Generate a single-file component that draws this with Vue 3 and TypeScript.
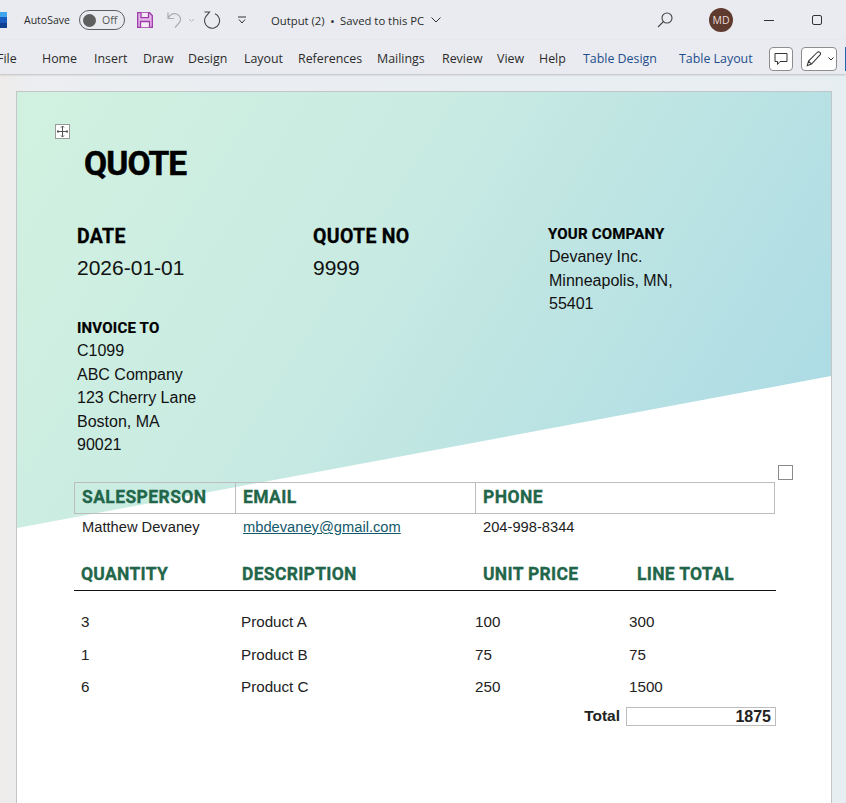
<template>
  <div class="window">
    <header class="titlebar">
      <svg class="logo" width="7" height="16" viewBox="0 0 7 16"><path d="M0 0h7v16H0z" fill="#185abd" /><path d="M0 0h7v5H0z" fill="#41a5ee" /><path d="M0 11h7v5H0z" fill="#103f91" /></svg>
      <span class="autosave">AutoSave</span>
      <span class="toggle"><i class="knob"></i><span>Off</span></span>
      <svg class="save" width="16" height="16" viewBox="0 0 16 16" fill="none" stroke="#9c3aa6" stroke-width="1.300">
        <path d="M.7.700h11.800L15.300 3.500v11.800H.7z" fill="#e6b8ea" />
        <path d="M4 .7v5h7.500V.7M3.500 15.300V9.500h9v5.800" fill="#f6e9f7" />
      </svg>
      <svg class="undo" width="15" height="16" viewBox="0 0 15 16" fill="none" stroke="#a9abb0" stroke-width="1.200">
        <path d="M1 .5v6h6M1 6.500C3 3 6 1 9.500 2c4 1.300 5 5.500 3 8.500L8 15.500" />
      </svg>
      <svg class="caret-dim" width="7" height="5" viewBox="0 0 7 5" fill="none" stroke="#b5b7bc"><path d="M1 1l2.500 2.500L6 1" /></svg>
      <svg class="redo" width="17" height="18" viewBox="0 0 17 18" fill="none" stroke="#44464a" stroke-width="1.100">
        <path d="M11 2.800a7.500 7.500 0 1 1-9 2.500L5.500 1H.5" />
      </svg>
      <svg class="qat" width="8" height="8" viewBox="0 0 8 8" fill="none" stroke="#333"><path d="M0 1h8M1 3.500l3 3.500 3-3.500" /></svg>
      <span class="doc-title">Output (2)<b>•</b>Saved to this PC</span>
      <svg class="title-chev" width="10" height="6" viewBox="0 0 10 6" fill="none" stroke="#333"><path d="M.5.500 5 5 9.500.500" /></svg>
      <svg class="search" width="16" height="16" viewBox="0 0 16 16" fill="none" stroke="#444" stroke-width="1.100"><circle cx="10" cy="6" r="5" /><path d="M6.500 9.500 1 15" /></svg>
      <span class="avatar">MD</span>
      <span class="minimize"></span>
      <span class="maximize"></span>
    </header>

    <nav class="tabs">
      <span v-for="tab in tabs" :key="tab.name" class="tab" :class="{ contextual: tab.contextual }" :style="{ width: tab.width + 'px' }">{{ tab.name }}</span>
      <span class="tool-btn comment">
        <svg width="14" height="14" viewBox="0 0 14 14" fill="none" stroke="#333"><path d="M1 1.500h12v8H6l-2.500 3v-3H1z" /></svg>
      </span>
      <span class="tool-btn editing">
        <svg width="16" height="16" viewBox="0 0 19 19" fill="none" stroke="#333" stroke-width="1.200"><path d="M1.500 17.500 3 12 13.500 1.500c1-.8 2-.8 3 .2s1 2 .2 3L6.500 15.500zM3 12l3.500 3.500" /></svg>
        <svg width="6" height="4" viewBox="0 0 6 4" fill="none" stroke="#333"><path d="M.5.500 3 3 5.500.500" /></svg>
      </span>
      <span class="share-edge"></span>
    </nav>

    <main class="canvas">
      <section class="page">
        <div class="swoosh"></div>
        <span class="move-handle">
          <svg width="11" height="11" viewBox="0 0 11 11" fill="none" stroke="#555"><path d="M5.500 0v11M0 5.500h11M4 1.500 5.500 0 7 1.500M4 9.500 5.500 11 7 9.500M1.500 4 0 5.500 1.500 7M9.500 4 11 5.500 9.500 7" /></svg>
        </span>
        <span class="resize-handle"></span>

        <h1 class="title">QUOTE</h1>

        <div class="meta">
          <div>
            <h2 class="meta-label">DATE</h2>
            <p class="meta-value">2026-01-01</p>
          </div>
          <div>
            <h2 class="meta-label">QUOTE NO</h2>
            <p class="meta-value">9999</p>
          </div>
          <div class="company">
            <h3 class="block-label">YOUR COMPANY</h3>
            <p v-for="line in company" :key="line" class="block-line">{{ line }}</p>
          </div>
        </div>

        <div class="invoice">
          <h3 class="block-label">INVOICE TO</h3>
          <p v-for="line in invoiceTo" :key="line" class="block-line">{{ line }}</p>
        </div>

        <div class="contact">
          <div class="contact-head">
            <span>SALESPERSON</span>
            <span>EMAIL</span>
            <span>PHONE</span>
          </div>
          <div class="contact-row">
            <span>Matthew Devaney</span>
            <a class="mail">mbdevaney@gmail.com</a>
            <span>204-998-8344</span>
          </div>
        </div>

        <div class="items-head">
          <span>QUANTITY</span>
          <span>DESCRIPTION</span>
          <span>UNIT PRICE</span>
          <span>LINE TOTAL</span>
        </div>
        <div class="items">
          <div v-for="item in items" :key="item.description" class="item-row">
            <span>{{ item.quantity }}</span>
            <span>{{ item.description }}</span>
            <span>{{ item.price }}</span>
            <span>{{ item.quantity * item.price }}</span>
          </div>
        </div>

        <div class="total">
          <span class="total-label">Total</span>
          <span class="total-value">{{ total }}</span>
        </div>
      </section>
    </main>
  </div>
</template>

<script setup lang="ts">
import { computed } from 'vue';

const tabs = [
  { name: 'File', width: 45 },
  { name: 'Home', width: 52 },
  { name: 'Insert', width: 49 },
  { name: 'Draw', width: 45 },
  { name: 'Design', width: 56 },
  { name: 'Layout', width: 54 },
  { name: 'References', width: 79 },
  { name: 'Mailings', width: 65 },
  { name: 'Review', width: 55 },
  { name: 'View', width: 42 },
  { name: 'Help', width: 44 },
  { name: 'Table Design', width: 96, contextual: true },
  { name: 'Table Layout', width: 90, contextual: true },
];

const company = ['Devaney Inc.', 'Minneapolis, MN,', '55401'];
const invoiceTo = ['C1099', 'ABC Company', '123 Cherry Lane', 'Boston, MA', '90021'];

const items = [
  { quantity: 3, description: 'Product A', price: 100 },
  { quantity: 1, description: 'Product B', price: 75 },
  { quantity: 6, description: 'Product C', price: 250 },
];

const total = computed(() => items.reduce((sum, item) => sum + item.quantity * item.price, 0));
</script>

<style>
html,
body {
  margin: 0;
  overflow: hidden;
}
</style>

<style scoped>
.window {
  width: 846px;
  height: 803px;
  overflow: hidden;
  display: flex;
  flex-direction: column;
  background: linear-gradient(90deg, #eeebea 0, #eceef1 30px, #e7eef2 100%);
  font-family: "Open Sans", "Noto Sans", sans-serif;
  color: #2b2b2b;
}

.titlebar {
  height: 40px;
  flex: none;
  display: flex;
  align-items: center;
  background: #e9ebf0;
  font-size: 11.500px;
}
.logo { margin-right: 17px; }
.autosave { width: 55px; font-size: 10.500px; }
.toggle {
  box-sizing: border-box;
  width: 46px;
  height: 20px;
  border: 1px solid #5d5d5d;
  border-radius: 10px;
  display: flex;
  align-items: center;
  gap: 6px;
  padding-left: 3px;
  font-size: 10.500px;
  color: #555;
}
.knob {
  width: 13px;
  height: 13px;
  border-radius: 50%;
  background: #5f5f5f;
}
.save { margin-left: 12px; }
.undo { margin-left: 14px; }
.caret-dim { margin-left: 6px; }
.redo { margin-left: 9px; }
.qat { margin-left: 17px; }
.doc-title { margin-left: 25px; width: 155px; white-space: nowrap; font-size: 11.300px; padding-top: 1px; }
.doc-title b { margin: 0 6px; font-size: 9px; }
.title-chev { margin-left: 5px; }
.search { margin-left: 216px; }
.avatar {
  margin-left: 36px;
  width: 24px;
  height: 24px;
  border-radius: 50%;
  background: #5e3a2f;
  color: #e9dcd8;
  font-size: 10.500px;
  display: flex;
  align-items: center;
  justify-content: center;
}
.minimize { margin-left: 31px; width: 10px; height: 1px; background: #333; }
.maximize { margin-left: 38px; width: 8px; height: 8px; border: 1px solid #333; border-radius: 2px; }

.tabs {
  box-sizing: border-box;
  height: 34px;
  padding-top: 3px;
  flex: none;
  display: flex;
  align-items: center;
  background: #e9ebf0;
  box-shadow: 0 1px 2px rgba(0, 0, 0, 0.2);
  font-size: 12.400px;
  position: relative;
  white-space: nowrap;
}
.tab { display: block; flex: none; }
.tab:first-child { margin-left: -3px; }
.contextual { color: #1f4e8c; }
.tool-btn {
  box-sizing: border-box;
  height: 24px;
  flex: none;
  display: flex;
  align-items: center;
  justify-content: center;
  gap: 6px;
  border: 1px solid #8d8d8d;
  border-radius: 4px;
  background: #fff;
}
.comment { width: 24px; }
.editing { width: 36px; margin-left: 8px; justify-content: flex-start; padding-left: 4px; }
.share-edge { width: 3px; height: 24px; margin-left: 8px; background: #2463ad; flex: none; }

.canvas {
  flex: 1;
  min-height: 0;
  padding: 17px 14px 0 16px;
}

.page {
  box-sizing: border-box;
  position: relative;
  width: 816px;
  height: 900px;
  background: #fff;
  border: 1px solid #c2c6c8;
  font-family: "Liberation Sans", Arial, sans-serif;
  color: #111;
  padding-left: 60px;
}
.page > *:not(.swoosh):not(.move-handle):not(.resize-handle) { position: relative; }

.swoosh {
  position: absolute;
  left: 0;
  top: 0;
  right: 0;
  height: 437px;
  clip-path: polygon(0 0, 100% 0, 100% 284px, 0 436px);
  background: linear-gradient(122deg, #d1f1e0 0%, #c9ebe2 40%, #a9d9e5 100%);
}
.move-handle {
  position: absolute;
  left: 38px;
  top: 32px;
  box-sizing: border-box;
  width: 15px;
  height: 15px;
  background: #fff;
  border: 1px solid #9a9a9a;
  display: flex;
  align-items: center;
  justify-content: center;
}
.resize-handle {
  position: absolute;
  left: 761px;
  top: 373px;
  box-sizing: border-box;
  width: 15px;
  height: 15px;
  background: #fff;
  border: 1px solid #8a8a8a;
}

h1, h2, h3, p { margin: 0; }

.title,
.meta-label,
.block-label,
.contact-head,
.items-head {
  font-family: Roboto, "Liberation Sans", Arial, sans-serif;
  font-weight: 700;
}

.title {
  margin: 51px 0 0 7px;
  height: 42px;
  line-height: 42px;
  font-size: 33.500px;
  letter-spacing: -0.900px;
  color: #000;
  -webkit-text-stroke: 0.5px #000;
}

.meta {
  display: grid;
  grid-template-columns: 236px 235px 1fr;
  margin-top: 37px;
  height: 94px;
}
.meta-label {
  margin-top: 3px;
  height: 24px;
  line-height: 24px;
  font-size: 19.500px;
  letter-spacing: 0.300px;
  color: #000;
  -webkit-text-stroke: 0.3px #000;
}
.meta-value {
  margin-top: 7px;
  line-height: 24px;
  font-size: 21px;
}
.company .block-line { padding-left: 1px; }

.block-label {
  height: 23px;
  line-height: 24px;
  font-size: 15px;
  letter-spacing: 0.200px;
  color: #000;
  -webkit-text-stroke: 0.2px #000;
}
.block-line {
  height: 23.500px;
  line-height: 23.500px;
  font-size: 16px;
}

.invoice { height: 136px; }

.contact { margin: 30px 0 0 -3px; width: 701px; }
.contact-head,
.contact-row {
  display: grid;
  grid-template-columns: 161px 240px 1fr;
}
.contact-head {
  box-sizing: border-box;
  grid-template-columns: 160px 240px 1fr;
  height: 32px;
  border: 1px solid #bdbdbd;
  font-size: 17.500px;
  letter-spacing: 0.400px;
  line-height: 29px;
  color: #22664a;
  -webkit-text-stroke: 0.3px #22664a;
}
.contact-head span { padding-left: 7px; }
.contact-head span + span { border-left: 1px solid #bdbdbd; }
.contact-row {
  height: 28px;
  line-height: 27px;
  font-size: 14.700px;
  color: #222;
}
.contact-row span,
.contact-row a { padding-left: 8px; }
.mail {
  color: #14596b;
  text-decoration: underline;
}

.items-head {
  box-sizing: border-box;
  margin: 17px 0 0 -3px;
  width: 702px;
  height: 32px;
  padding-left: 7px;
  border-bottom: 1px solid #111;
  display: grid;
  grid-template-columns: 161px 241px 154px 1fr;
  font-size: 17.500px;
  letter-spacing: 0.300px;
  line-height: 30px;
  color: #22664a;
  -webkit-text-stroke: 0.3px #22664a;
  white-space: nowrap;
}

.items { margin-top: 15px; }
.item-row {
  display: grid;
  grid-template-columns: 160px 234px 154px 1fr;
  padding-left: 4px;
  height: 32.500px;
  line-height: 32.500px;
  font-size: 15.200px;
  color: #222;
}

.total {
  width: 699px;
  height: 19px;
  margin-top: 3px;
  display: flex;
  justify-content: flex-end;
  align-items: center;
  gap: 6px;
  font-size: 15.500px;
  font-weight: 700;
  color: #222;
}
.total-value {
  box-sizing: border-box;
  width: 150px;
  height: 19px;
  line-height: 18px;
  border: 1px solid #bdbdbd;
  padding-right: 4px;
  text-align: right;
  font-size: 16px;
}
</style>
